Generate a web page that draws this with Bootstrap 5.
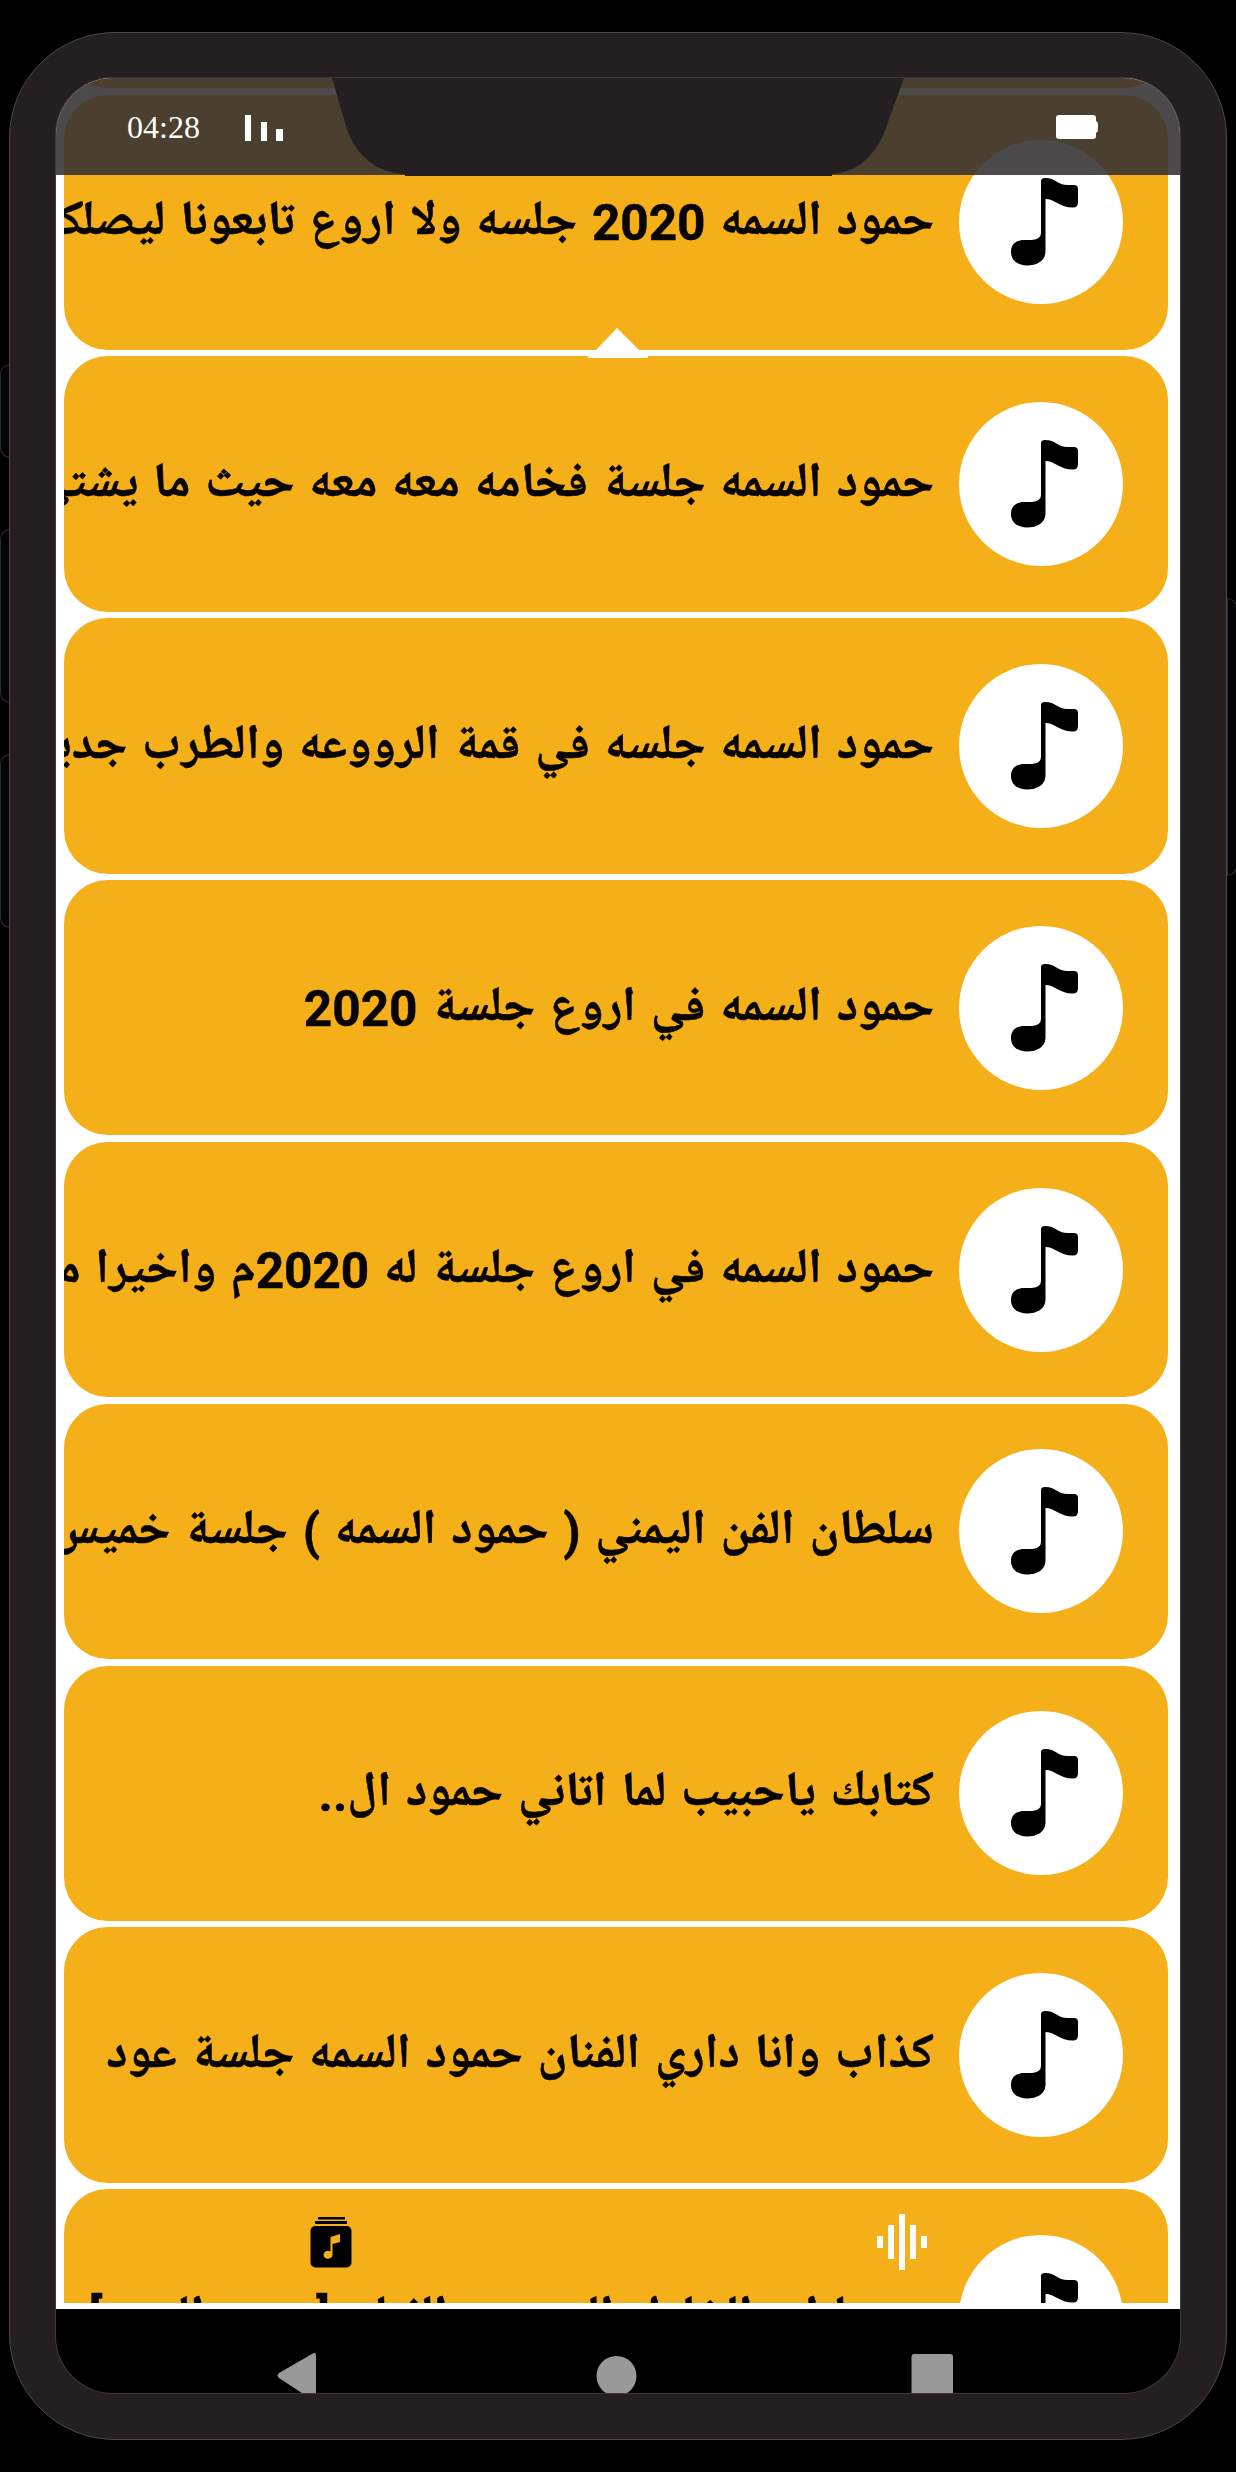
<!DOCTYPE html>
<html lang="ar">
<head>
<meta charset="utf-8">
<meta name="viewport" content="width=device-width, initial-scale=1">
<title>Music list</title>
<link href="https://cdn.jsdelivr.net/npm/bootstrap@5.3.0/dist/css/bootstrap.min.css" rel="stylesheet">
<style>
body{background:#000;height:2472px;overflow:hidden}
.device{width:1218px;height:2408px;margin:32px 0 0 9px;background:#242021;border:1px solid #4a4a4a;border-radius:106px;padding:45px 46px 0 46px}
.side-key{background:#030308;border:1px solid #2c2c2e;width:10px}
.key-l{left:0;border-radius:10px 0 0 10px}
.key-r{left:1227px;border-radius:0 10px 10px 0}
.k1{top:364px;height:94px}.k2{top:529px;height:174px}.k3{top:754px;height:174px}.k4{top:598px;height:278px}
.screen{width:1124px;height:2315px;border-radius:57px;background:#000;box-shadow:0 0 0 1px #3c3a3a}
.feed{height:2225px;padding:0 12px 0 8px;gap:6.56px}
.feed-wrap{height:2231px;background:#fff}
.song{height:255.3px;background:#f5af19;border-radius:44px;padding-right:45.500px;gap:24.500px;direction:rtl}
.song:first-child{margin-top:-245.300px}
.disc{width:164px;height:164px}
.title{font:bold 49px/80px "Noto Naskh Arabic UI","Noto Naskh Arabic",sans-serif;color:#080500;white-space:nowrap;word-spacing:3.900px;-webkit-text-stroke:.5px #080500}
.num{font-family:Roboto,sans-serif;font-size:49.500px;line-height:1;vertical-align:1.500px}
.statusbar{height:97px;background:rgba(51,49,50,.88)}
.clock{font:32px/36px "Liberation Serif",serif;color:#fff;margin:31px 0 0 71px}
.tabs{top:2112px}
.pointer{left:532px;top:249px}
.sysnav{height:84px}
</style>
</head>
<body class="position-relative">
<div class="side-key key-l k1 position-absolute"></div>
<div class="side-key key-l k2 position-absolute"></div>
<div class="side-key key-l k3 position-absolute"></div>
<div class="side-key key-r k4 position-absolute"></div>
<div class="d-flex"><main class="device position-relative">
<div class="screen position-relative overflow-hidden">
<div class="feed-wrap">
<div class="feed d-flex flex-column overflow-hidden">
<div class="song flex-shrink-0"></div>
<div class="song d-flex align-items-center flex-shrink-0 overflow-hidden"><svg class="disc flex-shrink-0" viewBox="0 0 164 164"><use href="#disc"/></svg><div class="title">حمود السمه <span class="num">2020</span> جلسه ولا اروع تابعونا ليصلكم</div></div>
<div class="song d-flex align-items-center flex-shrink-0 overflow-hidden"><svg class="disc flex-shrink-0" viewBox="0 0 164 164"><use href="#disc"/></svg><div class="title">حمود السمه جلسة فخامه معه معه حيث ما يشتي</div></div>
<div class="song d-flex align-items-center flex-shrink-0 overflow-hidden"><svg class="disc flex-shrink-0" viewBox="0 0 164 164"><use href="#disc"/></svg><div class="title">حمود السمه جلسه في قمة الرووعه والطرب جديد</div></div>
<div class="song d-flex align-items-center flex-shrink-0 overflow-hidden"><svg class="disc flex-shrink-0" viewBox="0 0 164 164"><use href="#disc"/></svg><div class="title">حمود السمه في اروع جلسة <span class="num">2020</span></div></div>
<div class="song d-flex align-items-center flex-shrink-0 overflow-hidden"><svg class="disc flex-shrink-0" viewBox="0 0 164 164"><use href="#disc"/></svg><div class="title">حمود السمه في اروع جلسة له <span class="num">2020</span>م واخيرا مع</div></div>
<div class="song d-flex align-items-center flex-shrink-0 overflow-hidden"><svg class="disc flex-shrink-0" viewBox="0 0 164 164"><use href="#disc"/></svg><div class="title">سلطان الفن اليمني <span class="num">(</span> حمود السمه <span class="num">)</span> جلسة خميس</div></div>
<div class="song d-flex align-items-center flex-shrink-0 overflow-hidden"><svg class="disc flex-shrink-0" viewBox="0 0 164 164"><use href="#disc"/></svg><div class="title">كتابك ياحبيب لما اتاني حمود ال<span class="num">..</span></div></div>
<div class="song d-flex align-items-center flex-shrink-0 overflow-hidden"><svg class="disc flex-shrink-0" viewBox="0 0 164 164"><use href="#disc"/></svg><div class="title">كذاب وانا داري الفنان حمود السمه جلسة عود</div></div>
<div class="song d-flex align-items-center flex-shrink-0 overflow-hidden"><svg class="disc flex-shrink-0" viewBox="0 0 164 164"><use href="#disc"/></svg><div class="title">عندما ابو الخاطر المبدع و الفنان <span class="num">[</span>حمود السمه<span class="num">]</span></div></div>
</div>
</div>
<nav class="sysnav">
<svg class="d-block" width="1124" height="84" viewBox="56 2309 1124 84" fill="#999"><path d="M279 2373Q276 2375.500 279 2378L311 2399Q316 2401 316 2396V2356Q316 2351 312 2354Z"/><circle cx="616.500" cy="2376" r="20"/><rect x="911.500" y="2354" width="41.500" height="46" rx="3"/></svg>
</nav>
<div class="statusbar position-absolute top-0 start-0 w-100 d-flex">
<svg class="position-absolute top-0 start-0" width="1124" height="99" viewBox="56 78 1124 99"><path d="M332 78L345 123C353 152 372 172 405 174V176H832V174C862 172 880 150 889 119L904 78Z" fill="#242021"/><path d="M245 115h6v26h-6zM261 122h6v19h-6zM276 129h7v12h-7zM1059 115h34q3 0 3 3v3q2 1 2 3v6q0 2-2 3v3q0 3-3 3h-34q-3 0-3-3v-18q0-3 3-3z" fill="#fff"/></svg>
<div class="clock position-relative">04:28</div>
</div>
<svg class="pointer position-absolute" width="60" height="32" viewBox="588 327 60 32"><path d="M617 328L640 351H648V358H588V351H595Z" fill="#fff"/></svg>
<svg class="tabs position-absolute start-0" width="1124" height="90" viewBox="56 2190 1124 90"><path d="M318 2217h27v2.500h-27zM315 2221h32v3h-32z"/><rect x="310.500" y="2226" width="41" height="41.500" rx="5"/><path d="M330.500 2237L340 2234V2242L332.500 2244V2255A4.500 4 0 1 1 330.500 2251.500Z" fill="#f5af19"/><path d="M877 2236h6v12h-6zM888 2225h6v34h-6zM899 2214h6v56h-6zM910 2225h6v34h-6zM921 2236h6v12h-6z" fill="#fff"/></svg>
</div>
</main></div>
<svg width="0" height="0" class="position-absolute"><defs><g id="disc"><circle cx="82" cy="82" r="82" fill="#fff"/><path d="M82 41Q82 38 86 38C97 38 98 45 109 45H115Q119 45 119 49V62Q119 67 115 67.500C101 68 96 59 86.500 59V112C86 121 78 125.500 68 125.500C58 125.500 52 120 52 112C52 105 56 100.500 64 100H73Q82 99 82 93Z"/></g></defs></svg>
<script src="https://cdn.jsdelivr.net/npm/bootstrap@5.3.0/dist/js/bootstrap.bundle.min.js"></script>
</body>
</html>
